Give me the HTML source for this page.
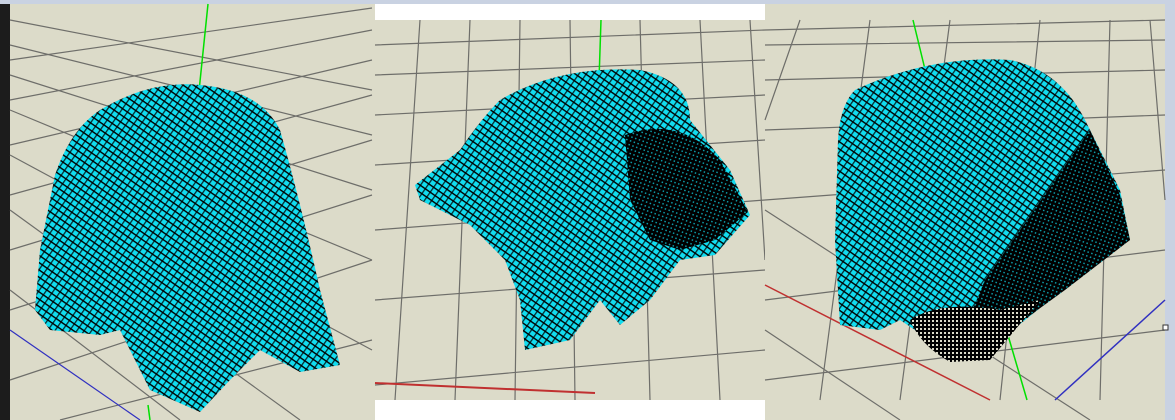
<!DOCTYPE html>
<html><head><style>
html,body{margin:0;padding:0;width:1175px;height:420px;overflow:hidden;background:#c9d2e2}
svg{display:block}
</style></head><body>
<svg width="1175" height="420" viewBox="0 0 1175 420" xmlns="http://www.w3.org/2000/svg">
<defs>
<pattern id="cl" width="6" height="6" patternUnits="userSpaceOnUse" patternTransform="rotate(35)">
<rect width="6" height="6" fill="#12dcef"/>
<rect width="6" height="1.4" fill="#000"/>
<rect width="1.3" height="6" fill="#000" opacity=".8"/>
</pattern>
<pattern id="dk" width="4" height="4" patternUnits="userSpaceOnUse" patternTransform="rotate(20)">
<rect width="4" height="4" fill="#000"/>
<rect width="1.5" height="1.5" fill="#12dcef" opacity=".7"/>
</pattern>
<pattern id="bg" width="4" height="4" patternUnits="userSpaceOnUse">
<rect width="4" height="4" fill="#000"/>
<rect width="2" height="2" fill="#dcdbc9"/>
</pattern>
</defs>
<rect x="0" y="0" width="1175" height="420" fill="#c9d2e2"/>
<rect x="0" y="4" width="10" height="416" fill="#1c1c1c"/>
<!-- panel 1 -->
<g>
<rect x="10" y="4" width="365" height="416" fill="#dcdbc9"/>
<g stroke="#6e6e6a" stroke-width="1.2" fill="none">
<path d="M10 60 L372 8 M10 100 L372 30 M10 145 L372 60 M10 195 L372 95 M10 250 L372 140 M10 310 L372 195 M10 380 L372 260 M60 420 L372 340"/>
<path d="M10 20 L372 90 M10 45 L372 135 M10 75 L372 190 M10 110 L372 260 M10 155 L372 350 M10 210 L300 420 M10 290 L180 420"/>
</g>
<path d="M10 330 L140 420" stroke="#3030c0" stroke-width="1.2"/>
<path d="M208 4 L196 120" stroke="#00e000" stroke-width="1.5"/>
<path d="M148 405 L150 420" stroke="#00e000" stroke-width="1.5"/>
<path d="M100 110 Q150 80 200 85 Q260 90 280 130 Q300 200 320 290 L340 365 L300 372 L260 350 L230 380 L200 412 L150 390 L120 330 L100 335 L50 330 L35 310 L40 250 L55 175 Q70 130 100 110 Z" fill="url(#cl)"/>
</g>
<!-- panel 2 -->
<g>
<rect x="375" y="4" width="390" height="416" fill="#fff"/>
<rect x="375" y="20" width="390" height="380" fill="#dcdbc9"/>
<g stroke="#6e6e6a" stroke-width="1.2" fill="none">
<path d="M375 45 L765 30 M375 75 L765 60 M375 115 L765 95 M375 165 L765 140 M375 230 L765 200 M375 300 L765 270 M375 385 L765 350"/>
<path d="M420 20 L395 400 M470 20 L455 400 M520 20 L515 400 M570 20 L575 400 M640 20 L650 400 M700 20 L720 400 M750 20 L765 260"/>
</g>
<path d="M375 383 L595 393" stroke="#c03030" stroke-width="2"/>
<path d="M601 20 L598 110" stroke="#00e000" stroke-width="1.5"/>
<path d="M500 100 Q560 65 640 70 Q690 80 690 120 L730 170 L750 215 L715 255 L680 260 L650 300 L620 325 L600 300 L570 340 L525 350 L520 300 L505 260 L470 225 L420 200 L415 185 L460 150 Q480 120 500 100 Z" fill="url(#cl)"/>
<path d="M625 135 Q680 115 720 160 L748 212 L715 240 L680 250 L650 240 L630 200 Z" fill="url(#dk)"/>
</g>
<!-- panel 3 -->
<g>
<rect x="765" y="4" width="400" height="416" fill="#dcdbc9"/>
<g stroke="#6e6e6a" stroke-width="1.2" fill="none">
<path d="M765 30 L1165 20 M765 45 L1165 40 M765 80 L1165 70 M765 130 L1165 115 M765 200 L1165 170 M765 300 L1165 250 M765 380 L1165 330"/>
<path d="M800 20 L765 120 M870 20 L820 400 M950 20 L900 400 M1040 20 L1000 400 M1110 20 L1100 400 M1150 20 L1165 200 M765 210 L1090 420 M765 330 L900 420"/>
</g>
<path d="M765 285 L990 400" stroke="#c03030" stroke-width="1.5"/>
<path d="M1055 400 L1165 300" stroke="#3030c0" stroke-width="1.5"/>
<path d="M913 20 L930 90" stroke="#00e000" stroke-width="1.5"/>
<path d="M1005 325 L1027 400" stroke="#00e000" stroke-width="1.5"/>
<path d="M855 90 Q930 55 1010 60 Q1060 70 1085 120 L1120 190 L1130 240 L1100 260 L1050 300 L1000 340 L960 360 L930 340 L900 320 L880 330 L840 325 L835 240 L838 140 Q840 105 855 90 Z" fill="url(#cl)"/>
<path d="M1090 130 L1120 195 L1130 240 L1065 290 L1010 330 L960 340 L985 280 Z" fill="url(#dk)"/>
<path d="M910 320 Q940 300 1000 310 L1040 300 L990 360 L950 362 Q920 345 910 320 Z" fill="url(#bg)"/>
<rect x="1163" y="325" width="5" height="5" fill="#fff" stroke="#333" stroke-width="1"/>
</g>
<rect x="375" y="4" width="790" height="0" fill="#fff"/>
</svg>
</body></html>
